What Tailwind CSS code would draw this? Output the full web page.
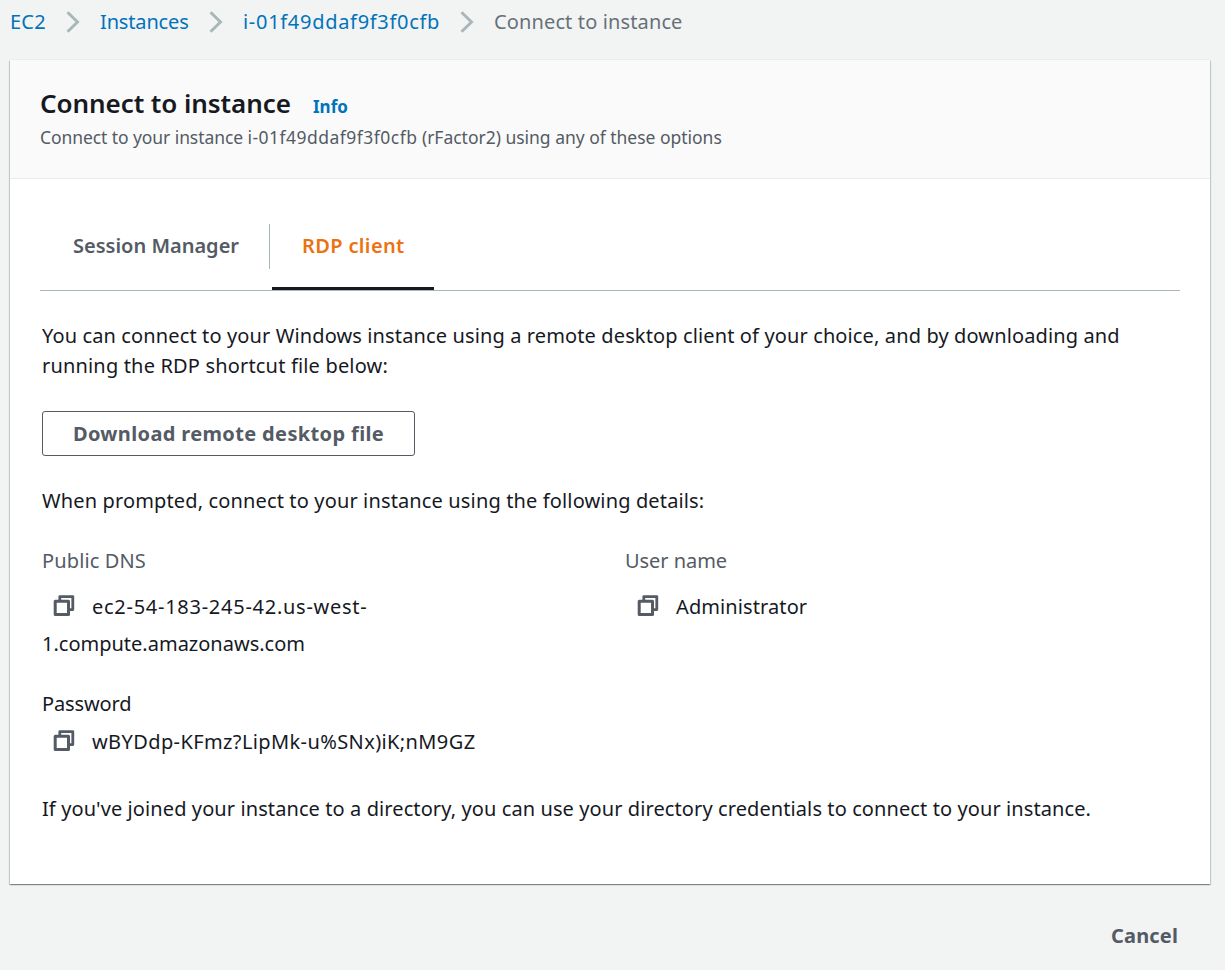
<!DOCTYPE html>
<html lang="en">
<head>
<meta charset="utf-8">
<title>Connect to instance</title>
<script src="https://cdn.jsdelivr.net/npm/@tailwindcss/browser@4"></script>
</head>
<body class="h-[970px] w-[1225px] overflow-hidden bg-[#f2f4f4] font-['Noto_Sans',sans-serif] text-[20px] leading-[30px] text-[#16191f]">
<svg class="hidden">
  <symbol id="chevron" viewBox="0 0 14 22"><path d="M1.5 1.2 11.5 11 1.5 20.8" fill="none" stroke="#aab7b8" stroke-width="3"/></symbol>
  <symbol id="copy" viewBox="0 0 22 22"><path d="M6.8 5V1.6h13v13H16" fill="none" stroke="#545b64" stroke-width="2.8" stroke-linejoin="round"/><path d="M2.2 6.2h13.3v13.3H2.2z" fill="none" stroke="#545b64" stroke-width="3" stroke-linejoin="round"/></symbol>
</svg>
<nav class="flex h-[60px] items-start whitespace-nowrap pl-[10px] pt-[7px] text-[#0073bb]">
  <a class="w-[56px] tracking-[0.2px]">EC2</a>
  <svg class="mt-[4px] h-[22px] w-[14px]"><use href="#chevron"/></svg>
  <a class="ml-[20px] w-[109px] tracking-[-0.15px]">Instances</a>
  <svg class="mt-[4px] h-[22px] w-[14px]"><use href="#chevron"/></svg>
  <a class="ml-[20px] w-[217px] tracking-[0.7px]">i-01f49ddaf9f3f0cfb</a>
  <svg class="mt-[4px] h-[22px] w-[14px]"><use href="#chevron"/></svg>
  <span class="ml-[20px] tracking-[0.13px] text-[#687078]">Connect to instance</span>
</nav>
<main class="ml-[10px] h-[824px] w-[1200px] bg-white shadow-[0_1px_1px_0_rgba(0,28,36,0.3),1px_1px_1px_0_rgba(0,28,36,0.15),-1px_1px_1px_0_rgba(0,28,36,0.15),0_-1px_0_0_#eaeded]">
  <header class="h-[119px] border-b border-[#eaeded] bg-[#fafafa] px-[30px] pt-[25px] whitespace-nowrap">
    <div class="flex h-[36px] items-baseline">
      <h1 class="w-[273px] text-[26px] leading-[36px] font-semibold tracking-[-0.07px]">Connect to instance</h1>
      <a class="text-[17px] font-bold text-[#0073bb]">Info</a>
    </div>
    <p class="mt-[2px] text-[17.5px] leading-[28px] tracking-[-0.08px] text-[#545b64]">Connect to your instance <span class="tracking-[0.48px]">i-01f49ddaf9f3f0cfb</span> <span class="tracking-[-0.02px]">(rFactor2) using any of these options</span></p>
  </header>
  <div class="mx-[30px] mt-[45px] flex h-[67px] border-b border-[#aab7b8] font-semibold whitespace-nowrap">
    <div class="h-[45px] w-[230px] border-r border-[#aab7b8] pt-[7px] pl-[33px] text-[#545b64]">Session Manager</div>
    <div class="ml-[2px] h-[66px] w-[162px] border-b-[3px] border-[#16191f] pt-[7px] pl-[30px] tracking-[0.36px] text-[#ec7211]">RDP client</div>
  </div>
  <section class="ml-[32px] whitespace-nowrap">
    <p class="mt-[30px]"><span class="tracking-[0.125px]">You can connect to your Windows instance using a remote desktop client of your choice, and by downloading and</span><br><span class="tracking-[0.17px]">running the RDP shortcut file below:</span></p>
    <button class="mt-[30px] block h-[45px] w-[373px] rounded-[3px] border border-[#545b64] text-center font-bold tracking-[0.36px] text-[#545b64]">Download remote desktop file</button>
    <p class="mt-[30px] tracking-[0.14px]">When prompted, connect to your instance using the following details:</p>
    <div class="mt-[30px] flex">
      <div class="w-[583px]">
        <div class="tracking-[0.13px] text-[#545b64]">Public DNS</div>
        <div class="mt-[12px] flex h-[38px] items-center pl-[11px]"><svg class="mb-[2px] h-[22px] w-[22px]"><use href="#copy"/></svg><span class="ml-[17px] tracking-[0.73px]">ec2-54-183-245-42.us-west-</span></div>
        <div class="h-[38px] leading-[36px]">1.compute.amazonaws.com</div>
      </div>
      <div>
        <div class="tracking-[-0.05px] text-[#545b64]">User name</div>
        <div class="mt-[12px] flex h-[38px] items-center pl-[12px]"><svg class="mb-[2px] h-[22px] w-[22px]"><use href="#copy"/></svg><span class="ml-[17px] tracking-[0.1px]">Administrator</span></div>
      </div>
    </div>
    <div class="mt-[25px] tracking-[-0.12px]">Password</div>
    <div class="mt-[4px] flex h-[38px] items-center pl-[11px]"><svg class="mb-[2px] h-[22px] w-[22px]"><use href="#copy"/></svg><span class="ml-[17px] tracking-[0.39px]">wBYDdp-KFmz?LipMk-u%SNx)iK;nM9GZ</span></div>
    <p class="mt-[33px] tracking-[0.095px]">If you've joined your instance to a directory, you can use your directory credentials to connect to your instance.</p>
  </section>
</main>
<footer class="flex justify-end pt-[37px] pr-[47px] font-bold text-[#545b64]"><button class="leading-[30px] tracking-[0.15px]">Cancel</button></footer>
</body>
</html>
